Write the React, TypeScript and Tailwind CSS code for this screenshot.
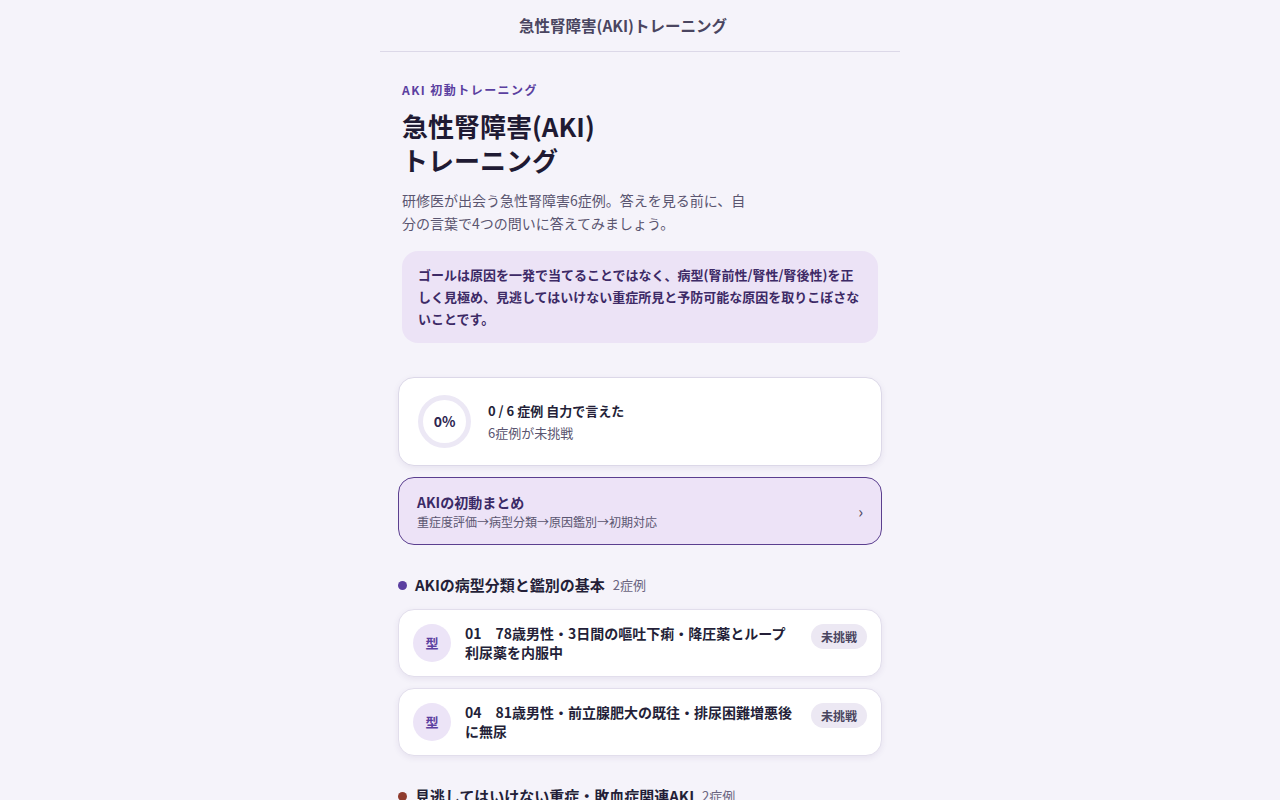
const cases = [
  {
    section: "AKIの病型分類と鑑別の基本",
    count: "2症例",
    dot: "bg-[#5b3fa0]",
    items: [
      { no: "01", title: "78歳男性・3日間の嘔吐下痢・降圧薬とループ利尿薬を内服中" },
      { no: "04", title: "81歳男性・前立腺肥大の既往・排尿困難増悪後に無尿" },
    ],
  },
  {
    section: "見逃してはいけない重症・敗血症関連AKI",
    count: "2症例",
    dot: "bg-[#8f3b2e]",
    items: [
      { no: "02", title: "65歳女性・発熱と血圧低下・乳酸上昇" },
      { no: "05", title: "55歳男性・横紋筋融解の疑い" },
    ],
  },
]

function CaseCard({ no, title }: { no: string; title: string }) {
  return (
    <div className="flex items-center gap-[14px] rounded-2xl border border-[#e2deec] bg-white px-[14px] py-[14px] shadow-[0_2px_6px_rgba(60,40,110,0.08)]">
      <div className="flex h-[38px] w-[38px] shrink-0 items-center justify-center rounded-full bg-[#ece4f7] text-[13px] font-bold text-[#5b3fa0]">
        型
      </div>
      <p className="flex-1 text-[14px] font-bold leading-[19px] text-[#241f38]">
        {no}
        {"\u3000"}
        {title}
      </p>
      <span className="shrink-0 self-start rounded-full bg-[#ece8f3] px-[10px] py-[3px] text-[12px] font-bold leading-[19px] text-[#4a4560]">
        未挑戦
      </span>
    </div>
  )
}

export default function App() {
  return (
    <div
      className="min-h-screen bg-[#f5f3fa] text-[#241f38]"
      style={{ fontFamily: '"Noto Sans CJK JP", "Noto Sans", sans-serif' }}
    >
      <div className="mx-auto w-[520px]">
        <header className="flex h-[52px] items-center justify-center border-b border-[#dcd8e8] pr-[34px]">
          <h1 className="text-[15.5px] font-bold text-[#4a4560]">急性腎障害(AKI)トレーニング</h1>
        </header>

        <main className="px-[18px] pt-[29px] pb-10">
          <div className="px-1">
            <p className="text-[12px] font-bold tracking-[0.12em] text-[#5b3fa0]">AKI 初動トレーニング</p>
            <h2 className="mt-[10px] text-[26px] font-bold leading-[34px] text-[#1f1a33]">
              急性腎障害(AKI)
              <br />
              トレーニング
            </h2>
            <p className="mt-[12px] max-w-[350px] text-[14px] leading-[23px] text-[#5a5570]">
              研修医が出会う急性腎障害6症例。答えを見る前に、自分の言葉で4つの問いに答えてみましょう。
            </p>
            <div className="mt-[16px] rounded-2xl bg-[#ece3f6] px-4 py-[13px] text-[13px] font-bold leading-[22px] text-[#3d2a66]">
              ゴールは原因を一発で当てることではなく、病型(腎前性/腎性/腎後性)を正しく見極め、見逃してはいけない重症所見と予防可能な原因を取りこぼさないことです。
            </div>
          </div>

          <div className="mt-[34px] flex items-center gap-[17px] rounded-2xl border border-[#dcd8e8] bg-white px-[19px] py-[17px] shadow-[0_2px_6px_rgba(60,40,110,0.08)]">
            <div className="flex h-[53px] w-[53px] shrink-0 items-center justify-center rounded-full border-[5px] border-[#ece8f5] text-[14px] font-bold text-[#2d2550]">
              0%
            </div>
            <div>
              <p className="text-[13px] font-bold leading-[22px] text-[#241f38]">0 / 6 症例 自力で言えた</p>
              <p className="mt-[1px] text-[13px] leading-[20px] text-[#5a5570]">6症例が未挑戦</p>
            </div>
          </div>

          <div className="mt-[11px] flex items-center justify-between rounded-2xl border border-[#5b3f8f] bg-[#ede3f7] px-[18px] py-[13px]">
            <div>
              <p className="text-[14px] font-bold leading-[22px] text-[#3b2a66]">AKIの初動まとめ</p>
              <p className="text-[12px] leading-[18px] text-[#5a5570]">重症度評価→病型分類→原因鑑別→初期対応</p>
            </div>
            <span className="text-[16px] text-[#4a4560]">›</span>
          </div>

          {cases.map((group) => (
            <section key={group.section} className="mt-[29px]">
              <div className="flex items-center">
                <span className={`h-[9px] w-[9px] rounded-full ${group.dot}`} />
                <span className="ml-[8px] text-[15px] font-bold leading-[22px] text-[#241f38]">{group.section}</span>
                <span className="ml-[8px] text-[13px] text-[#6a6580]">{group.count}</span>
              </div>
              <div className="mt-[13px] flex flex-col gap-[11px]">
                {group.items.map((c) => (
                  <CaseCard key={c.no} no={c.no} title={c.title} />
                ))}
              </div>
            </section>
          ))}
        </main>
      </div>
    </div>
  )
}
